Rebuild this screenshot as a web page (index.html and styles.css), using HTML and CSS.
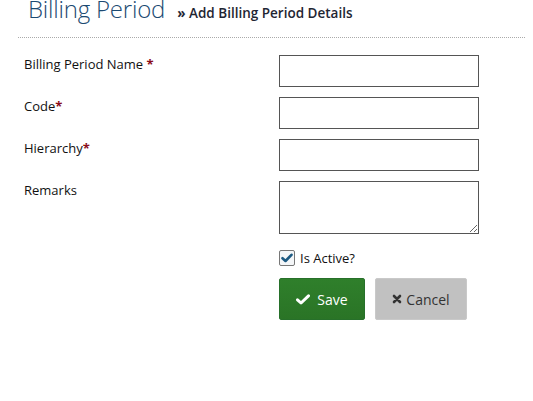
FILE: index.html
```html
<!DOCTYPE html>
<html>
<head>
<meta charset="utf-8">
<link rel="stylesheet" href="styles.css">
</head>
<body>
<div class="page">
  <div class="header">
    <h1 class="title">Billing Period</h1>
    <span class="subtitle"><span class="raquo">»</span> Add Billing Period Details</span>
  </div>
  <form class="form">
    <div class="row">
      <label class="label">Billing Period Name <span class="req">*</span></label>
      <input class="input" type="text">
    </div>
    <div class="row">
      <label class="label">Code<span class="req">*</span></label>
      <input class="input" type="text">
    </div>
    <div class="row">
      <label class="label">Hierarchy<span class="req">*</span></label>
      <input class="input" type="text">
    </div>
    <div class="row">
      <label class="label">Remarks</label>
      <textarea class="input textarea"></textarea>
    </div>
    <div class="row check-row">
      <span class="label"></span>
      <label class="check">
        <span class="box"><svg width="12" height="10" viewBox="0 0 12 10"><path d="M1.5 5.2 L4.5 8 L10.5 1.8" fill="none" stroke="#1d5a82" stroke-width="2.6" stroke-linecap="round" stroke-linejoin="round"/></svg></span>
        Is Active?
      </label>
    </div>
    <div class="row btn-row">
      <span class="label"></span>
      <div class="buttons">
        <button type="button" class="btn save"><svg width="14" height="11" viewBox="0 0 14 11"><path d="M1.5 5.8 L5 9 L12.5 1.8" fill="none" stroke="#fff" stroke-width="3" stroke-linecap="round" stroke-linejoin="round"/></svg>Save</button>
        <button type="button" class="btn cancel"><svg width="10" height="10" viewBox="0 0 10 10"><path d="M2 2 L8 8 M8 2 L2 8" fill="none" stroke="#333" stroke-width="2.6" stroke-linecap="round"/></svg>Cancel</button>
      </div>
    </div>
  </form>
</div>
</body>
</html>
```
FILE: styles.css
```css
html, body {
  margin: 0;
  padding: 0;
  background: #fff;
}
body {
  font-family: "Open Sans", "Liberation Sans", sans-serif;
  color: #222;
}
.page {
  padding: 0 8px 0 18px;
}
.header {
  display: flex;
  align-items: baseline;
  gap: 12px;
  padding: 0 0 11px 10px;
  margin-top: -8px;
  border-bottom: 1px dotted #aaa;
}
.title {
  margin: 0;
  font-size: 24px;
  font-weight: 300;
  color: #1b4a72;
  line-height: 34px;
  letter-spacing: -0.2px;
}
.subtitle {
  font-size: 13.5px;
  font-weight: 600;
  color: #1f2633;
}
.raquo {
  font-weight: 700;
}
.form {
  padding-top: 17px;
}
.row {
  display: flex;
  align-items: flex-start;
  margin-bottom: 10px;
}
.label {
  width: 255px;
  padding-left: 6px;
  padding-top: 0;
  font-size: 13px;
  font-weight: 400;
  color: #111;
  flex-shrink: 0;
}
.req {
  color: #8b0d1a;
  font-weight: 700;
}
.input {
  box-sizing: border-box;
  width: 200px;
  height: 32px;
  border: 1px solid #555;
  margin: 0;
  padding: 4px 6px;
  font-family: inherit;
  background: #fff;
}
.textarea {
  height: 53px;
  resize: vertical;
}
.check-row {
  margin-top: 15px;
  margin-bottom: 11px;
}
.check {
  display: flex;
  align-items: center;
  gap: 5px;
  font-size: 13px;
  color: #111;
}
.box {
  box-sizing: border-box;
  width: 16px;
  height: 16px;
  border: 1px solid #777;
  border-radius: 2px;
  background: #f4f6f8;
  display: flex;
  align-items: center;
  justify-content: center;
}
.buttons {
  display: flex;
  gap: 10px;
}
.btn {
  height: 42px;
  border-radius: 2px;
  font-family: inherit;
  font-size: 14px;
  display: flex;
  align-items: center;
  justify-content: center;
  gap: 7px;
  padding: 0;
  cursor: pointer;
}
.save {
  width: 86px;
  background: linear-gradient(#2f7f2b, #2a7426);
  border: 1px solid #27702a;
  color: #fff;
}
.cancel {
  width: 92px;
  background: #c1c1c1;
  border: 1px solid #c9c9c9;
  color: #333;
  gap: 4px;
}
```
